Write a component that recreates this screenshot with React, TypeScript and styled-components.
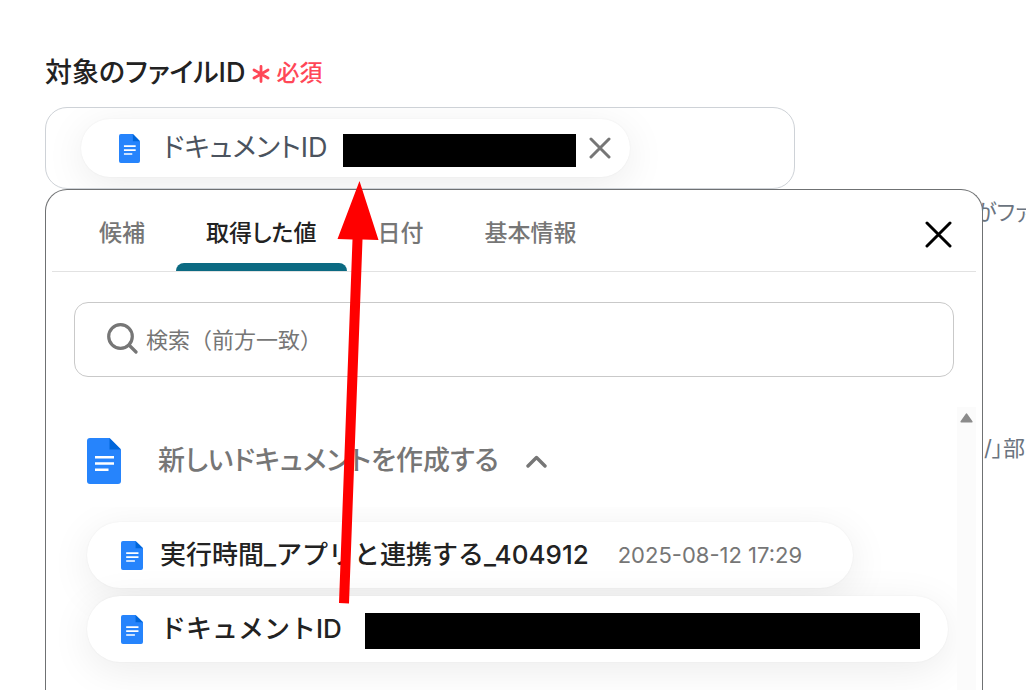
import React from 'react';
import styled, { createGlobalStyle } from 'styled-components';

const GlobalStyle = createGlobalStyle`
  *, *::before, *::after { box-sizing: border-box; }
  body {
    margin: 0;
    background: #fff;
    color: #222;
    font-family: Inter, "Noto Sans CJK JP", sans-serif;
  }
  button, input { font: inherit; color: inherit; }
  button { background: none; border: 0; padding: 0; cursor: pointer; }
`;

const Page = styled.main`
  position: relative;
  display: flex;
  flex-direction: column;
  height: 100vh;
  min-height: 480px;
  padding: 55px 0 0 45px;
  overflow: hidden;
`;

const LabelRow = styled.div`
  display: flex;
  align-items: center;
  height: 36px;
  margin-bottom: 16px;
  font-feature-settings: "palt";
  font-weight: 500;
  white-space: nowrap;
`;

const FieldLabel = styled.span`
  font-size: 27px;
  line-height: 36px;
`;

const Required = styled.span`
  display: flex;
  align-items: center;
  gap: 6px;
  margin-left: 7px;
  color: #ff4757;
  font-size: 23px;
  line-height: 36px;
`;

const Field = styled.div`
  display: flex;
  align-items: center;
  flex-shrink: 0;
  width: calc(100% - 231px);
  height: 82px;
  padding: 0 35px;
  border: 1px solid #ced2d7;
  border-radius: 22px;
  overflow: hidden;
`;

const Chip = styled.div`
  display: flex;
  align-items: center;
  height: 58px;
  padding: 0 18px 0 38px;
  border-radius: 29px;
  background: #fff;
  box-shadow: 0 0 2px rgba(0, 0, 0, 0.06), 0 8px 40px rgba(0, 0, 0, 0.08);
  color: #4b535e;
  white-space: nowrap;
`;

const ChipText = styled.span`
  margin: 0 15px 0 23px;
  font-size: 27px;
  line-height: 36px;
  font-feature-settings: "palt";
`;

const Redaction = styled.span<{ $w: number; $h: number }>`
  flex-shrink: 0;
  width: ${(p) => p.$w}px;
  height: ${(p) => p.$h}px;
  margin-top: 4px;
  background: #000;
`;

const IconButton = styled.button`
  display: flex;
  align-items: center;
  justify-content: center;
`;

const ChipClose = styled(IconButton)`
  width: 24px;
  height: 24px;
  margin-left: 12px;
`;

const Below = styled.div`
  position: relative;
  flex: 1;
  min-height: 0;
`;

const Help = styled.div`
  display: flex;
  flex-direction: column;
  gap: 204px;
  padding-top: 7px;
  overflow: hidden;
  color: #6b7480;
  font-size: 22px;
  line-height: 32px;
  font-feature-settings: "palt";
  white-space: nowrap;
`;

const HelpLine = styled.p<{ $indent: number }>`
  margin: 0 0 0 calc(100% - ${(p) => p.$indent}px);
`;

const Panel = styled.section`
  position: absolute;
  inset: 0 43px 0 0;
  display: flex;
  flex-direction: column;
  padding: 0 6px;
  border: 1px solid #6f7173;
  border-bottom: 0;
  border-radius: 22px 22px 0 0;
  background: #fff;
  overflow: hidden;
`;

const TabBar = styled.div`
  display: flex;
  justify-content: space-between;
  flex-shrink: 0;
  height: 82px;
  padding: 0 22px 0 17px;
  border-bottom: 1px solid #e2e2e2;
`;

const Tabs = styled.div`
  display: flex;
`;

const Tab = styled.button<{ $active?: boolean }>`
  position: relative;
  padding: 25px 31px 20px 30px;
  color: ${(p) => (p.$active ? '#222' : '#767676')};
  font-size: 23px;
  line-height: 36px;
  font-weight: 500;
  font-feature-settings: "palt";
  white-space: nowrap;
  &::after {
    content: "";
    display: ${(p) => (p.$active ? 'block' : 'none')};
    position: absolute;
    left: 0;
    right: 0;
    bottom: 0;
    height: 8px;
    border-radius: 8px 8px 0 0;
    background: #0b6a82;
  }
`;

const PanelClose = styled(IconButton)`
  align-self: center;
  width: 32px;
  height: 32px;
  margin-top: 8px;
`;

const SearchBox = styled.label`
  display: flex;
  align-items: center;
  flex-shrink: 0;
  gap: 8px;
  height: 75px;
  margin: 30px 22px 30px;
  padding: 0 32px;
  border: 1px solid #c9c9c9;
  border-radius: 14px;
`;

const SearchInput = styled.input`
  flex: 1;
  min-width: 0;
  height: 40px;
  padding: 0;
  border: 0;
  outline: 0;
  background: transparent;
  font-size: 22px;
  line-height: 32px;
  &::placeholder { color: #767676; opacity: 1; }
`;

const ScrollArea = styled.div`
  display: flex;
  flex: 1;
  min-height: 0;
`;

const Results = styled.div`
  display: flex;
  flex-direction: column;
  flex: 1;
  min-width: 0;
  padding-top: 8px;
  overflow: hidden;
`;

const GroupHeader = styled.button`
  display: flex;
  align-items: center;
  flex-shrink: 0;
  height: 92px;
  padding-left: 35px;
  color: #767676;
  text-align: left;
`;

const GroupTitle = styled.span`
  margin: 0 27px 0 37px;
  font-size: 27px;
  line-height: 36px;
  font-weight: 500;
  font-feature-settings: "palt";
  white-space: nowrap;
`;

const ItemList = styled.div`
  display: flex;
  flex-direction: column;
  align-items: flex-start;
  flex: 1;
  gap: 8px;
  min-height: 0;
  padding: 15px 0 0 35px;
  overflow: hidden;
`;

const Item = styled.button<{ $end: number }>`
  display: flex;
  align-items: center;
  flex-shrink: 0;
  height: 66px;
  padding: 0 ${(p) => p.$end}px 0 34px;
  border-radius: 33px;
  background: #fff;
  box-shadow: 0 0 2px rgba(0, 0, 0, 0.06), 0 8px 40px rgba(0, 0, 0, 0.08);
  white-space: nowrap;
`;

const ItemName = styled.span`
  margin: 0 23px 0 17px;
  font-size: 26px;
  line-height: 36px;
  font-weight: 500;
`;

const ItemTime = styled.time`
  margin-left: 6px;
  color: #767676;
  font-size: 22px;
  line-height: 36px;
`;

const ScrollTrack = styled.div`
  display: flex;
  justify-content: center;
  flex-shrink: 0;
  width: 19px;
  padding-top: 6px;
  background: #fbfbfb;
`;

const Arrow = styled.svg`
  position: absolute;
  left: 337px;
  top: 181px;
  pointer-events: none;
`;

const DocIcon = ({ w, h }: { w: number; h: number }) => (
  <svg width={w} height={h} viewBox="0 0 34 46" preserveAspectRatio="none" aria-hidden="true">
    <path d="M3 0H22.5L34 11.5V43a3 3 0 0 1-3 3H3a3 3 0 0 1-3-3V3a3 3 0 0 1 3-3Z" fill="#2684fc" />
    <path d="M22.5 0L34 11.5H22.5Z" fill="#0066da" />
    <path d="M8 18h19v2.6H8zM8 24.2h19v2.6H8zM8 30.4h13.5V33H8z" fill="#fff" />
  </svg>
);

const Cross = ({ size, width, color }: { size: number; width: number; color: string }) => (
  <svg width={size} height={size} viewBox={`0 0 ${size} ${size}`} aria-hidden="true">
    <path
      d={`M2 2L${size - 2} ${size - 2}M${size - 2} 2L2 ${size - 2}`}
      stroke={color}
      strokeWidth={width}
      strokeLinecap="round"
    />
  </svg>
);

export default function App() {
  return (
    <Page>
      <GlobalStyle />
      <LabelRow>
        <FieldLabel id="file-id">対象のファイルID</FieldLabel>
        <Required>
          <svg width="18" height="20" viewBox="0 0 18 20" aria-hidden="true">
            <path d="M9 3.5v15M2 7l14 8M16 7L2 15" stroke="#ff4757" strokeWidth="2.8" strokeLinecap="round" />
          </svg>
          必須
        </Required>
      </LabelRow>
      <Field role="group" aria-labelledby="file-id">
        <Chip>
          <DocIcon w={21} h={29} />
          <ChipText>ドキュメントID</ChipText>
          <Redaction $w={233} $h={33} />
          <ChipClose aria-label="削除">
            <Cross size={22} width={3} color="#767676" />
          </ChipClose>
        </Chip>
      </Field>
      <Below>
        <Help>
          <HelpLine $indent={51}>がファ</HelpLine>
          <HelpLine $indent={42}>/」部</HelpLine>
        </Help>
        <Panel>
          <TabBar>
            <Tabs role="tablist">
              <Tab role="tab">候補</Tab>
              <Tab role="tab" aria-selected $active>取得した値</Tab>
              <Tab role="tab">日付</Tab>
              <Tab role="tab">基本情報</Tab>
            </Tabs>
            <PanelClose aria-label="閉じる">
              <Cross size={27} width={3} color="#000" />
            </PanelClose>
          </TabBar>
          <SearchBox>
            <svg width="31" height="33" viewBox="0 0 31 33" fill="none" aria-hidden="true">
              <circle cx="13.5" cy="13.5" r="11.8" stroke="#767676" strokeWidth="3.2" />
              <path d="M22 22l7 7" stroke="#767676" strokeWidth="3.2" strokeLinecap="round" />
            </svg>
            <SearchInput type="text" aria-label="検索" placeholder="検索（前方一致）" />
          </SearchBox>
          <ScrollArea>
            <Results>
              <GroupHeader aria-expanded="true">
                <DocIcon w={34} h={46} />
                <GroupTitle>新しいドキュメントを作成する</GroupTitle>
                <svg width="21" height="13" viewBox="0 0 21 13" fill="none" aria-hidden="true">
                  <path d="M2 11l8.5-8.5L19 11" stroke="#767676" strokeWidth="3.4" strokeLinecap="round" strokeLinejoin="round" />
                </svg>
              </GroupHeader>
              <ItemList>
                <Item $end={51}>
                  <DocIcon w={22} h={29} />
                  <ItemName>実行時間_アプリと連携する_404912</ItemName>
                  <ItemTime>2025-08-12 17:29</ItemTime>
                </Item>
                <Item $end={28}>
                  <DocIcon w={22} h={29} />
                  <ItemName>ドキュメントID</ItemName>
                  <Redaction $w={555} $h={36} />
                </Item>
              </ItemList>
            </Results>
            <ScrollTrack>
              <svg width="13" height="10" viewBox="0 0 13 10" aria-hidden="true">
                <path d="M6.5 1.2L11.8 8.8H1.2Z" fill="#8b8b8b" stroke="#8b8b8b" strokeWidth="1.6" strokeLinejoin="round" />
              </svg>
            </ScrollTrack>
          </ScrollArea>
        </Panel>
      </Below>
      <Arrow width="42" height="424" viewBox="0 0 42 424" aria-hidden="true">
        <path d="M22.5 0L41.5 59L25.5 58.6L12 422.5L2 422L15.5 58.4L0.5 58Z" fill="#f00" />
      </Arrow>
    </Page>
  );
}
